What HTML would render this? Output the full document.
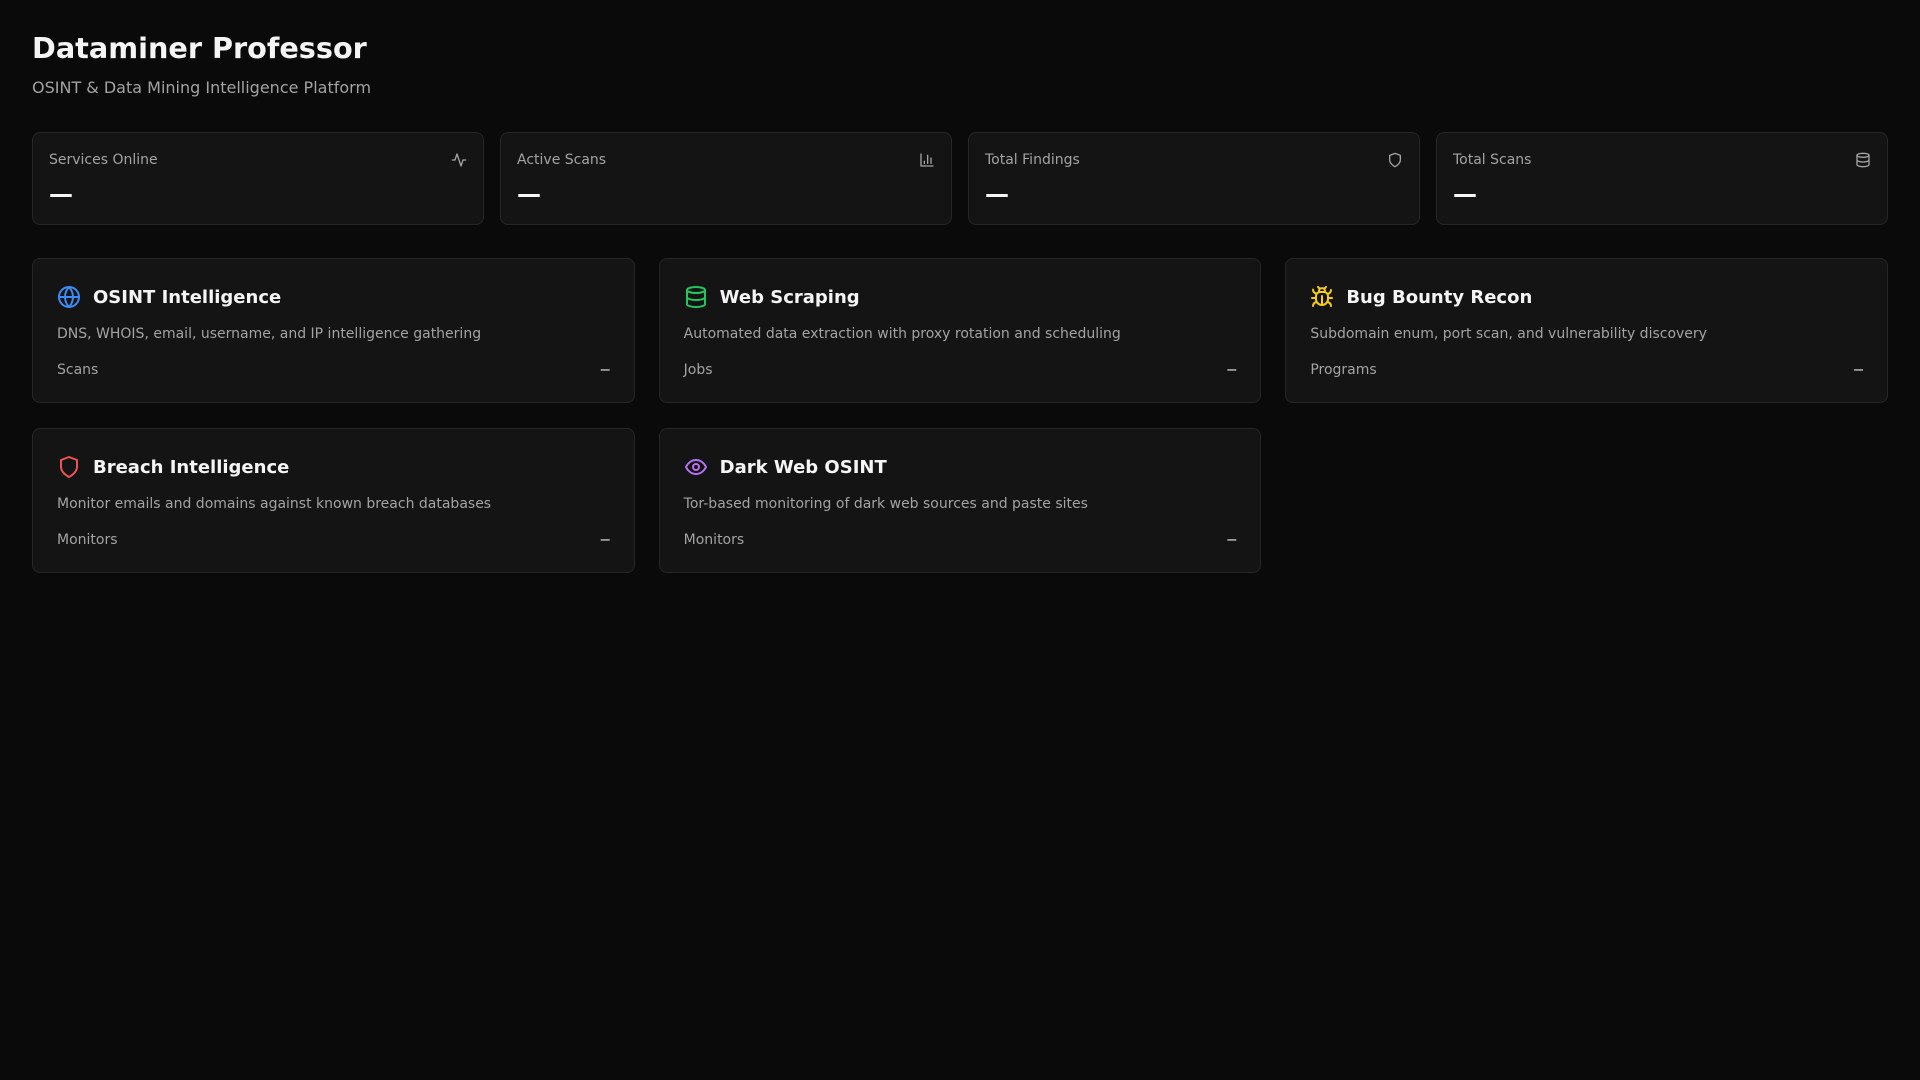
<!DOCTYPE html>
<html><head><meta charset="utf-8"><style>
*{box-sizing:border-box;margin:0;padding:0}
body{width:1920px;height:1080px;background:#0a0a0a;font-family:"DejaVu Sans","Liberation Sans",sans-serif;color:#f5f5f5;padding:32px}
h1{font-size:28.7px;font-weight:bold;line-height:36px;margin-top:-2px}
.sub{font-size:16px;color:#a3a3a3;line-height:24px;margin-top:10px}
.stats{display:grid;grid-template-columns:repeat(4,1fr);gap:16px;margin-top:32px}
.stat{background:#141414;border:1px solid #262626;border-radius:8px;padding:17px 16px 13px;height:93px}
.row{display:flex;justify-content:space-between;align-items:center;height:20px}
.lab{font-size:14px;color:#a3a3a3}
.val{font-size:24px;font-weight:bold;line-height:32px;margin-top:8px}
.grid{display:grid;grid-template-columns:repeat(3,1fr);gap:25px 24px;margin-top:33px}
.card{background:#141414;border:1px solid #262626;border-radius:8px;padding:26px 24px 22px;height:145px}
.t{display:flex;align-items:center;gap:12px;font-size:18px;font-weight:bold;height:24px}
.d{font-size:14px;color:#a3a3a3;line-height:20px;margin-top:15px}
.f{display:flex;justify-content:space-between;font-size:14px;color:#a3a3a3;line-height:20px;margin-top:16px}
.f b{color:#f5f5f5;font-weight:normal;font-family:"Liberation Sans",sans-serif;font-size:16px}
svg{fill:none;stroke-width:2;stroke-linecap:round;stroke-linejoin:round}
.si{width:16px;height:16px;stroke:#a3a3a3}
.ci{width:24px;height:24px}
</style></head><body>
<h1>Dataminer Professor</h1>
<div class="sub">OSINT &amp; Data Mining Intelligence Platform</div>
<div class="stats">
<div class="stat"><div class="row"><span class="lab">Services Online</span><svg class="si" viewBox="0 0 24 24"><path d="M22 12h-4l-3 9L9 3l-3 9H2"/></svg></div><div class="val">—</div></div>
<div class="stat"><div class="row"><span class="lab">Active Scans</span><svg class="si" viewBox="0 0 24 24"><path d="M3 3v18h18M18 17V9M13 17V5M8 17v-3"/></svg></div><div class="val">—</div></div>
<div class="stat"><div class="row"><span class="lab">Total Findings</span><svg class="si" viewBox="0 0 24 24"><path d="M12 22s8-4 8-10V5l-8-3-8 3v7c0 6 8 10 8 10z"/></svg></div><div class="val">—</div></div>
<div class="stat"><div class="row"><span class="lab">Total Scans</span><svg class="si" viewBox="0 0 24 24"><ellipse cx="12" cy="5" rx="9" ry="3"/><path d="M3 5v14c0 1.7 4 3 9 3s9-1.3 9-3V5M3 12c0 1.7 4 3 9 3s9-1.3 9-3"/></svg></div><div class="val">—</div></div>
</div>
<div class="grid">
<div class="card"><div class="t"><svg class="ci" viewBox="0 0 24 24" stroke="#3b8cf6"><circle cx="12" cy="12" r="10"/><path d="M2 12h20M12 2a15 15 0 0 1 4 10 15 15 0 0 1-4 10 15 15 0 0 1-4-10 15 15 0 0 1 4-10z"/></svg>OSINT Intelligence</div><div class="d">DNS, WHOIS, email, username, and IP intelligence gathering</div><div class="f"><span>Scans</span><b>–</b></div></div>
<div class="card"><div class="t"><svg class="ci" viewBox="0 0 24 24" stroke="#22c55e"><ellipse cx="12" cy="5" rx="9" ry="3"/><path d="M3 5v14c0 1.7 4 3 9 3s9-1.3 9-3V5M3 12c0 1.7 4 3 9 3s9-1.3 9-3"/></svg>Web Scraping</div><div class="d">Automated data extraction with proxy rotation and scheduling</div><div class="f"><span>Jobs</span><b>–</b></div></div>
<div class="card"><div class="t"><svg class="ci" viewBox="0 0 24 24" stroke="#facc15"><path d="M8 2l1.9 1.9M14.1 3.9L16 2M9 7.1v-1a3 3 0 1 1 6 0v1"/><path d="M12 20c-3.3 0-6-2.7-6-6v-3a4 4 0 0 1 4-4h4a4 4 0 0 1 4 4v3c0 3.3-2.7 6-6 6zM12 20v-9M6.5 8.5C4.6 8.3 3 6.7 3 4.6M6 13H2M3 21c0-2.1 1.7-3.9 3.8-4M20.97 5c0 2.1-1.6 3.8-3.5 4M22 13h-4M17.2 17c2.1.1 3.8 1.9 3.8 4"/></svg>Bug Bounty Recon</div><div class="d">Subdomain enum, port scan, and vulnerability discovery</div><div class="f"><span>Programs</span><b>–</b></div></div>
<div class="card"><div class="t"><svg class="ci" viewBox="0 0 24 24" stroke="#f05252"><path d="M12 22s8-4 8-10V5l-8-3-8 3v7c0 6 8 10 8 10z"/></svg>Breach Intelligence</div><div class="d">Monitor emails and domains against known breach databases</div><div class="f"><span>Monitors</span><b>–</b></div></div>
<div class="card"><div class="t"><svg class="ci" viewBox="0 0 24 24" stroke="#b870f5"><path d="M2 12s3-7 10-7 10 7 10 7-3 7-10 7-10-7-10-7z"/><circle cx="12" cy="12" r="3"/></svg>Dark Web OSINT</div><div class="d">Tor-based monitoring of dark web sources and paste sites</div><div class="f"><span>Monitors</span><b>–</b></div></div>
</div>
</body></html>
